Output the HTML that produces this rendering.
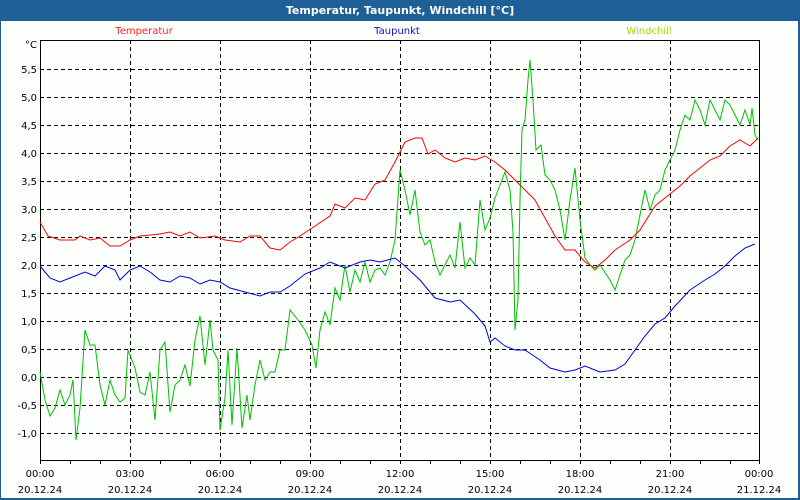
<!DOCTYPE html>
<html><head><meta charset="utf-8"><style>
html,body{margin:0;padding:0;width:800px;height:500px;overflow:hidden;background:#1d5f96}
svg{display:block}
text{font-family:"DejaVu Sans","Liberation Sans",sans-serif;font-size:10px}
</style></head><body>
<svg width="800" height="500" xmlns="http://www.w3.org/2000/svg">
<rect x="0" y="0" width="800" height="500" fill="#1d5f96"/>
<rect x="1" y="21" width="797" height="477" fill="#fcfffc"/>
<text x="400" y="14" fill="#fff" text-anchor="middle" font-weight="bold" style="font-size:11px">Temperatur, Taupunkt, Windchill [°C]</text>
<text x="144" y="34" fill="#ff2020" text-anchor="middle">Temperatur</text>
<text x="397" y="34" fill="#1010c0" text-anchor="middle">Taupunkt</text>
<text x="649" y="34" fill="#a0dd00" text-anchor="middle">Windchill</text>
<g stroke="#000" stroke-dasharray="4,3" stroke-width="1">
<path d="M130.5 40V460M220.5 40V460M310.5 40V460M400.5 40V460M490.5 40V460M580.5 40V460M670.5 40V460"/>
<path d="M40 69.5H759M40 97.5H759M40 125.5H759M40 153.5H759M40 181.5H759M40 209.5H759M40 237.5H759M40 265.5H759M40 293.5H759M40 321.5H759M40 349.5H759M40 377.5H759M40 405.5H759M40 433.5H759"/>
</g>
<rect x="40.5" y="40.5" width="719" height="420" fill="none" stroke="#000"/>
<path stroke="#000" d="M40.5 460V464M70.5 460V464M100.5 460V464M130.5 460V464M160.5 460V464M190.5 460V464M220.5 460V464M250.5 460V464M280.5 460V464M310.5 460V464M340.5 460V464M370.5 460V464M400.5 460V464M430.5 460V464M460.5 460V464M490.5 460V464M520.5 460V464M550.5 460V464M580.5 460V464M610.5 460V464M640.5 460V464M670.5 460V464M700.5 460V464M730.5 460V464M759.5 460V464"/>
<g fill="#000" text-anchor="end">
<text x="37" y="48">°C</text>
<text x="37" y="73">5,5</text><text x="37" y="101">5,0</text><text x="37" y="129">4,5</text><text x="37" y="157">4,0</text><text x="37" y="185">3,5</text><text x="37" y="213">3,0</text><text x="37" y="241">2,5</text><text x="37" y="269">2,0</text><text x="37" y="297">1,5</text><text x="37" y="325">1,0</text><text x="37" y="353">0,5</text><text x="37" y="381">0,0</text><text x="37" y="409">-0,5</text><text x="37" y="437">-1,0</text>
</g>
<g fill="#000" text-anchor="middle">
<text x="40" y="477">00:00</text><text x="40" y="493">20.12.24</text>
<text x="130" y="477">03:00</text><text x="130" y="493">20.12.24</text>
<text x="220" y="477">06:00</text><text x="220" y="493">20.12.24</text>
<text x="310" y="477">09:00</text><text x="310" y="493">20.12.24</text>
<text x="400" y="477">12:00</text><text x="400" y="493">20.12.24</text>
<text x="490" y="477">15:00</text><text x="490" y="493">20.12.24</text>
<text x="580" y="477">18:00</text><text x="580" y="493">20.12.24</text>
<text x="670" y="477">21:00</text><text x="670" y="493">20.12.24</text>
<text x="759" y="477">00:00</text><text x="759" y="493">21.12.24</text>
</g>
<g fill="none" stroke-width="1">
<polyline stroke="#00c000" points="40,372 45,400 50,416 55,408 60,390 65,405 70,395 73,380 76,440 80,408 85,330 90,345 95,345 100,385 105,405 110,380 115,395 120,402 125,398 128,350 135,368 140,392 145,395 150,372 155,420 160,350 165,342 170,412 175,385 180,380 185,365 190,386 195,340 200,316 205,365 210,320 213,350 218,360 220,430 225,398 228,350 232,425 237,348 242,428 247,395 250,420 255,385 260,360 265,380 270,372 275,372 280,350 285,350 290,310 298,320 305,330 312,345 316,368 320,330 325,312 330,325 335,288 340,300 345,265 350,292 355,270 360,282 365,262 370,282 375,270 380,268 385,275 390,262 395,240 400,170 405,190 410,215 415,190 420,232 425,245 430,240 435,262 440,275 445,265 450,255 455,268 460,222 465,268 470,258 475,265 480,200 485,230 490,218 495,198 500,185 505,172 510,190 513,232 515,330 518,300 520,200 522,130 525,120 528,80 530,60 533,100 536,150 541,145 545,175 550,180 555,190 560,210 565,240 570,200 575,168 580,220 585,258 590,265 595,270 600,265 610,280 615,290 620,275 625,260 630,255 635,240 640,215 645,190 650,210 655,195 660,190 665,170 670,160 675,150 680,130 685,115 690,120 695,100 700,110 705,125 710,100 715,110 720,120 725,100 730,105 735,115 740,125 745,110 750,125 752,108 755,135 758,140"/>
<polyline stroke="#ff0000" points="40,222 48,236 60,240 75,240 80,236 90,240 100,238 110,246 120,246 130,240 140,236 160,234 170,232 180,236 190,232 200,238 215,236 225,240 240,242 250,236 260,236 270,248 280,250 290,242 300,236 315,226 330,216 335,204 345,208 355,198 365,200 375,184 385,180 395,162 405,142 415,138 422,138 428,154 435,150 445,158 455,162 465,158 475,160 485,156 495,162 505,170 515,180 525,190 535,200 545,218 555,236 565,250 575,250 585,262 595,268 605,260 615,250 630,240 640,230 655,206 670,194 680,186 690,176 700,168 710,160 720,156 730,146 740,140 750,146 758,138"/>
<polyline stroke="#0000e0" points="40,266 50,278 60,282 70,278 85,272 95,276 105,266 115,270 120,280 130,270 140,266 150,272 160,280 170,282 180,276 190,278 200,284 210,280 220,282 230,288 245,292 260,296 270,292 280,292 290,286 305,274 320,268 330,262 345,268 360,262 370,260 380,262 395,258 405,266 420,280 435,298 450,302 460,300 475,314 485,326 490,342 495,338 505,346 515,350 525,350 540,360 550,368 565,372 575,370 585,366 600,372 615,370 625,364 635,350 645,336 655,324 665,318 675,306 690,290 705,280 715,274 725,266 735,256 745,248 755,244"/>
</g>
</svg>
</body></html>
